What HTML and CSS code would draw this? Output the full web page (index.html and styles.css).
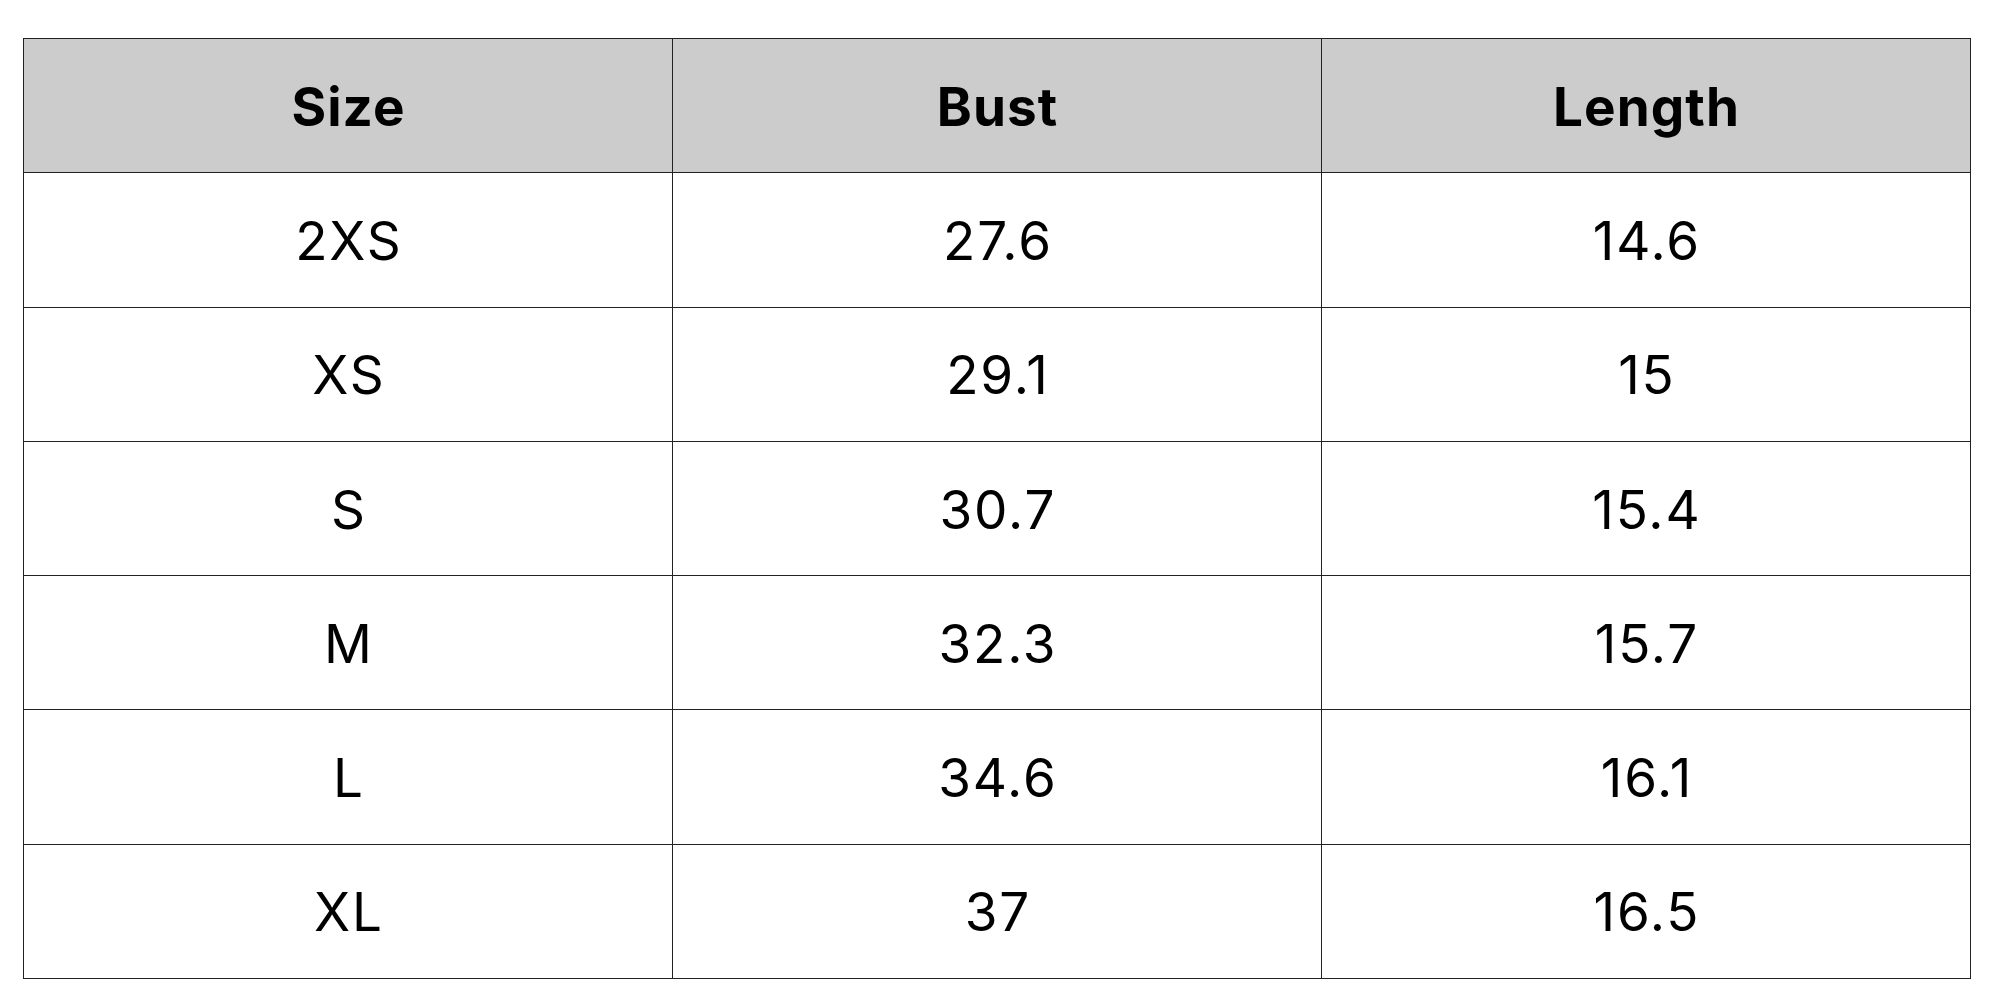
FILE: index.html
```html
<!DOCTYPE html>
<html lang="en">
<head>
<meta charset="utf-8">
<title>Size Chart</title>
<link rel="stylesheet" href="styles.css">
</head>
<body>
<main class="page">
  <table class="size-table">
    <thead>
      <tr><th>Size</th><th>Bust</th><th>Length</th></tr>
    </thead>
    <tbody>
      <tr><td>2XS</td><td>27.6</td><td>14.6</td></tr>
      <tr><td>XS</td><td>29.1</td><td>15</td></tr>
      <tr><td>S</td><td>30.7</td><td>15.4</td></tr>
      <tr><td>M</td><td>32.3</td><td>15.7</td></tr>
      <tr><td>L</td><td>34.6</td><td>16.1</td></tr>
      <tr><td>XL</td><td>37</td><td>16.5</td></tr>
    </tbody>
  </table>
</main>
</body>
</html>
```
FILE: styles.css
```css
html, body {
  margin: 0;
  padding: 0;
  background: #ffffff;
}

.page {
  padding: 38px 0 0 23px;
}

.size-table {
  width: 1948px;
  border-collapse: collapse;
  table-layout: fixed;
  font-family: Inter, "Liberation Sans", sans-serif;
  color: #000000;
}

.size-table th,
.size-table td {
  border: 1px solid #222222;
  height: 130.3px;
  padding: 3px 0 0 0;
  text-align: center;
  vertical-align: middle;
  font-size: 53px;
  line-height: 1;
}

.size-table th {
  background: #cccccc;
  font-weight: 700;
  letter-spacing: 0.02em;
  text-indent: 0.02em;
}

.size-table td {
  font-weight: 400;
  letter-spacing: 0.035em;
  text-indent: 0.035em;
}
```
